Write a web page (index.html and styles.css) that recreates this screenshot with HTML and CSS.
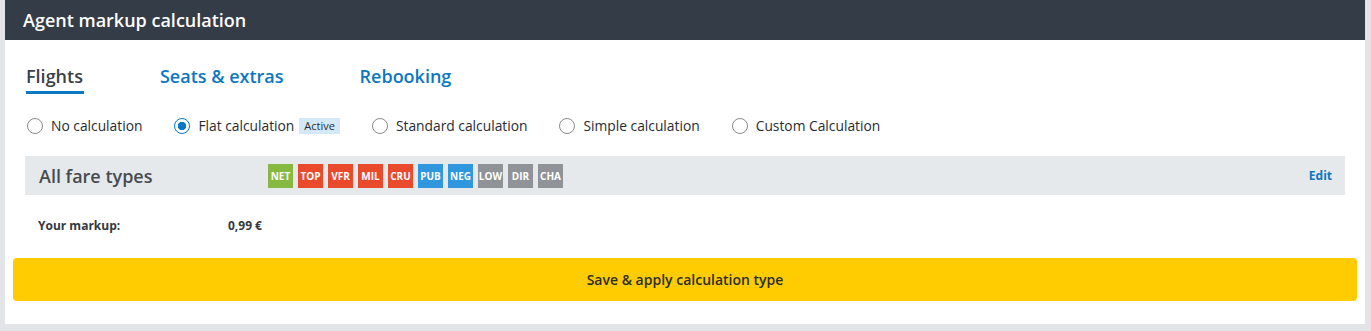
FILE: index.html
```html
<!DOCTYPE html>
<html lang="en">

<head>
    <meta charset="UTF-8">
    <title>Agent markup calculation</title>
    <link rel="stylesheet" href="styles.css">
</head>

<body>
    <div class="panel">
        <header class="panel-header">
            <h1>Agent markup calculation</h1>
        </header>
        <main class="panel-body">
            <nav class="tabs">
                <a class="tab active">Flights</a>
                <a class="tab">Seats &amp; extras</a>
                <a class="tab">Rebooking</a>
            </nav>

            <div class="calc-types">
                <label class="radio"><span class="circle"></span>No calculation</label>
                <label class="radio checked"><span class="circle"></span>Flat calculation <span class="badge-active">Active</span></label>
                <label class="radio"><span class="circle"></span>Standard calculation</label>
                <label class="radio"><span class="circle"></span>Simple calculation</label>
                <label class="radio"><span class="circle"></span>Custom Calculation</label>
            </div>

            <div class="fare-row">
                <span class="fare-title">All fare types</span>
                <div class="fare-tags">
                    <span class="tag green">NET</span>
                    <span class="tag red">TOP</span>
                    <span class="tag red">VFR</span>
                    <span class="tag red">MIL</span>
                    <span class="tag red">CRU</span>
                    <span class="tag blue">PUB</span>
                    <span class="tag blue">NEG</span>
                    <span class="tag grey">LOW</span>
                    <span class="tag grey">DIR</span>
                    <span class="tag grey">CHA</span>
                </div>
                <a class="edit">Edit</a>
            </div>

            <div class="markup">
                <span class="markup-label">Your markup:</span>
                <span class="markup-value">0,99 €</span>
            </div>

            <button class="save">Save &amp; apply calculation type</button>
        </main>
    </div>
</body>

</html>
```
FILE: styles.css
```css
/* Basic Reset */
html,
body {
    margin: 0;
    padding: 0;
    background-color: #e3e4e8;
    font-family: 'Open Sans', 'Noto Sans', sans-serif;
    color: #333333;
}

/* Panel */
.panel {
    margin: 0 6px 0 5px;
    background: #ffffff;
    height: 324px;
}

.panel-header {
    background: #333c47;
    height: 40px;
    display: flex;
    align-items: center;
    padding-left: 18px;
}

.panel-header h1 {
    margin: 0;
    font-size: 18px;
    font-weight: 600;
    color: #ffffff;
}

.panel-body {
    padding: 0 8px;
}

/* Tabs */
.tabs {
    display: flex;
    padding: 24px 0 0 13px;
}

.tab {
    font-size: 18px;
    font-weight: 600;
    color: #0b78c2;
    padding-bottom: 2px;
    margin-right: 76px;
    line-height: 25px;
    border-bottom: 3px solid transparent;
}

.tab.active {
    color: #3b4048;
    border-bottom-color: #0b78c2;
    padding: 0 1px 2px 0;
    margin-right: 76px;
}

/* Calculation types */
.calc-types {
    display: flex;
    align-items: center;
    padding: 22px 0 0 14px;
    height: 19px;
}

.radio {
    display: flex;
    align-items: center;
    font-size: 13.8px;
    color: #272c33;
    margin-right: 32px;
}

.circle {
    width: 14px;
    height: 14px;
    border: 1px solid #8b8b8b;
    border-radius: 50%;
    margin-right: 8px;
    box-sizing: content-box;
}

.radio.checked .circle {
    border-color: #0b78c2;
    background: radial-gradient(circle, #0b78c2 0 4px, #ffffff 4.5px);
}

.badge-active {
    background: #d4e9f8;
    font-size: 11px;
    padding: 1px 5px;
    margin-left: 5px;
    line-height: 14px;
}

/* Fare row */
.fare-row {
    display: flex;
    align-items: center;
    background: #e6e9eb;
    height: 39px;
    margin: 21px 12px 0 12px;
    padding: 0 13px 0 14px;
}

.fare-title {
    font-size: 18px;
    font-weight: 600;
    color: #464b51;
    width: 229px;
}

.fare-tags {
    display: flex;
    gap: 5px;
    flex: 1;
}

.tag {
    width: 25px;
    height: 24px;
    font-size: 10px;
    font-weight: 700;
    color: #ffffff;
    display: flex;
    align-items: center;
    justify-content: center;
}

.green { background: #86b93f; }
.red { background: #ea4a2c; }
.blue { background: #2e97de; }
.grey { background: #8f9397; }

.edit {
    font-size: 12px;
    font-weight: 700;
    color: #0b78c2;
}

/* Markup */
.markup {
    display: flex;
    padding: 22px 0 0 25px;
    font-size: 12px;
    font-weight: 700;
    color: #34393f;
    height: 18px;
}

.markup-label {
    width: 190px;
}

/* Save button */
.save {
    display: block;
    width: 100%;
    margin-top: 23px;
    height: 43px;
    border: none;
    border-radius: 4px;
    background: #fecc00;
    font-family: inherit;
    font-size: 14px;
    font-weight: 600;
    color: #2c2c2c;
}
```
